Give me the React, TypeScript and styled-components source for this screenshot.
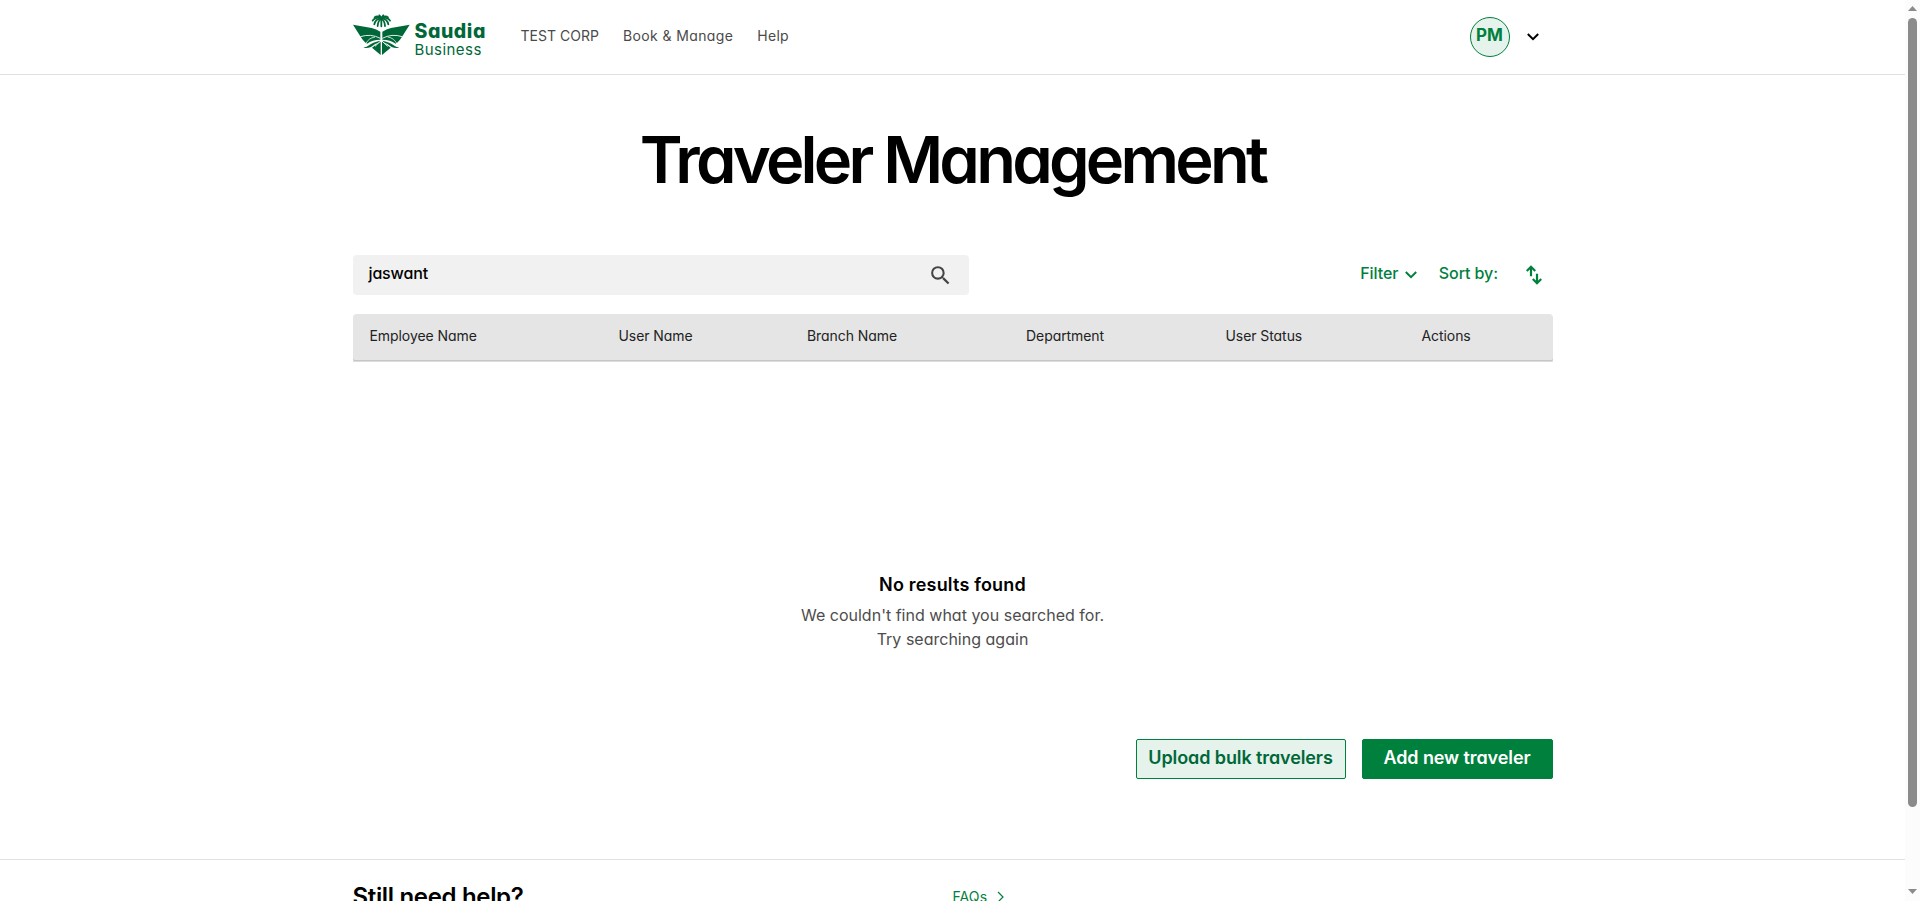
import React from 'react';
import styled, { createGlobalStyle } from 'styled-components';
import { MdSearch } from 'react-icons/md';

const green = '#00803d';
const darkGreen = '#006838';
const paleGreen = '#e6f2ec';

const GlobalStyle = createGlobalStyle`
  * { box-sizing: border-box; }
  body {
    margin: 0;
    background: #fff;
    overflow: hidden;
    font-family: Inter, "Liberation Sans", sans-serif;
    font-feature-settings: "cv11";
  }
`;

const Frame = styled.div`
  display: flex;
  height: 100vh;
  overflow: hidden;
`;
const Page = styled.div`
  flex: 1;
  min-width: 0;
  height: 100%;
  overflow: hidden;
`;
const Container = styled.div`
  width: 1200px;
  margin: 0 auto;
`;

const Header = styled.header`
  height: 75px;
  border-bottom: 1px solid #e1e1e1;
`;
const HeaderInner = styled(Container)`
  height: 74px;
  display: flex;
  align-items: center;
`;
const Brand = styled.div`
  display: flex;
  width: 168px;
  height: 42px;
  margin-bottom: 5px;
  color: ${darkGreen};
`;
const BrandText = styled.div`
  margin: 8px 0 0 5px;
`;
const BrandName = styled.div`
  font-size: 19.5px;
  font-weight: 800;
  letter-spacing: 0.55px;
  line-height: 19px;
  white-space: nowrap;
`;
const BrandSub = styled.div`
  font-size: 15px;
  font-weight: 400;
  letter-spacing: 0.45px;
  line-height: 18px;
`;
const Nav = styled.nav`
  display: flex;
  gap: 24px;
  flex: 1;
  margin-bottom: 2px;
`;
const NavLink = styled.a<{ $spacing?: number }>`
  font-size: 14px;
  line-height: 20px;
  color: #4a4a4a;
  letter-spacing: ${p => p.$spacing ?? 0}px;
`;
const Account = styled.div`
  display: flex;
  align-items: center;
  gap: 17px;
  margin-right: 14px;
`;
const Avatar = styled.div`
  width: 40px;
  height: 40px;
  border: 1px solid ${green};
  border-radius: 50%;
  background: ${paleGreen};
  color: ${green};
  font-size: 17px;
  font-weight: 700;
  line-height: 34px;
  text-align: center;
`;

const Title = styled.h1`
  margin: 45px 0 55px;
  font-size: 65px;
  font-weight: 600;
  line-height: 80px;
  letter-spacing: -3.76px;
  text-align: center;
  color: #000;
`;
const Toolbar = styled.div`
  display: flex;
  justify-content: space-between;
  height: 40px;
`;
const SearchBox = styled.div`
  display: flex;
  align-items: center;
  justify-content: space-between;
  width: 616px;
  padding: 0 16px;
  border-radius: 4px;
  background: #f1f1f1;
  color: #444;
`;
const SearchText = styled.span`
  margin-bottom: 4px;
  font-size: 16px;
  font-weight: 500;
  line-height: 24px;
  letter-spacing: -0.15px;
  color: #000;
`;
const Tools = styled.div`
  display: flex;
  align-items: center;
  padding-right: 11px;
  color: ${green};
`;
const ToolLabel = styled.span`
  margin-bottom: 4px;
  font-size: 16px;
  font-weight: 500;
  line-height: 24px;
  letter-spacing: -0.08px;
`;
const FilterButton = styled.div`
  display: flex;
  align-items: center;
  gap: 6.5px;
  margin-right: 22px;
`;
const SortButton = styled.div`
  display: flex;
  align-items: center;
  gap: 27.5px;
`;

const TableHead = styled.div`
  display: grid;
  grid-template-columns: 249px 188.5px 219px 199.5px 196px 1fr;
  height: 48px;
  margin-top: 19px;
  padding: 12px 0 0 17px;
  border-radius: 4px 4px 2px 2px;
  background: #e5e5e5;
  box-shadow: inset 0 -1px 0 #dcdcdc, inset 0 -2px 0 #c6c6c6;
`;
const HeadCell = styled.span`
  font-size: 14px;
  line-height: 20px;
  letter-spacing: -0.07px;
  color: #222;
`;

const EmptyState = styled.div`
  margin-top: 211px;
  text-align: center;
`;
const EmptyTitle = styled.h2`
  margin: 0 0 6px;
  font-size: 18px;
  font-weight: 600;
  line-height: 24px;
  letter-spacing: 0.19px;
  color: #000;
`;
const EmptyText = styled.p`
  margin: 0;
  font-size: 16px;
  line-height: 24px;
  letter-spacing: 0.01px;
  color: #4d4d4d;
`;
const Actions = styled.div`
  display: flex;
  justify-content: flex-end;
  gap: 16px;
  margin-top: 88px;
`;
const Button = styled.button<{ $primary?: boolean }>`
  width: ${p => (p.$primary ? 191 : 210)}px;
  height: 40px;
  padding: 0 0 3px;
  border: 1px solid ${green};
  border-radius: 2px;
  background: ${p => (p.$primary ? green : paleGreen)};
  color: ${p => (p.$primary ? '#fff' : darkGreen)};
  font: 600 18px/24px Inter, sans-serif;
  font-feature-settings: "cv11";
  letter-spacing: -0.1px;
`;
const Footer = styled.footer`
  margin-top: 80px;
  border-top: 1px solid #e1e1e1;
`;
const FooterInner = styled(Container)`
  display: grid;
  grid-template-columns: 1fr 1fr;
  padding-top: 21px;
`;
const FooterTitle = styled.h3`
  margin: 0;
  font-size: 24px;
  font-weight: 600;
  line-height: 32px;
  letter-spacing: -0.33px;
  color: #000;
`;
const FaqLink = styled.a`
  display: flex;
  align-items: center;
  gap: 10px;
  height: 20px;
  margin-top: 6px;
  font-size: 14px;
  line-height: 20px;
  letter-spacing: 0.1px;
  color: ${green};
`;

const Scrollbar = styled.div`
  display: flex;
  flex-direction: column;
  align-items: center;
  width: 15px;
  padding: 6px 0 7px;
  background: #fcfcfc;
`;
const Thumb = styled.div`
  width: 9px;
  height: 789px;
  margin: 7px 0 auto;
  border-radius: 5px;
  background: #8b8b8b;
`;
const Arrow = styled.svg`
  display: block;
  width: 9px;
  height: 5px;
  fill: #8b8b8b;
`;

const Chevron = () => (
  <svg width="12" height="8" viewBox="0 0 12 8" fill="none" stroke="currentColor" strokeWidth="2">
    <path d="M0.8 1 L6 6.2 L11.2 1" />
  </svg>
);

const Wing = () => (
  <>
    <path d="M38 71 L94 81 Q108 84 120 92 L120 116 Q96 116 80 128 Q70 122 59 104 Z" />
    <path d="M60 107 Q92 97 120 112" fill="none" stroke="#fff" strokeWidth="2.6" />
    <path d="M76 129 Q84 111 104 108" fill="none" stroke="#fff" strokeWidth="2.2" />
    <path d="M69 140 Q80 138 86 133 Q96 124 119 119 L120 123 Q103 127 92 138 Q80 143 69 140 Z" />
    <path d="M95 140 Q107 129 121 122 L121 162 Z" />
  </>
);

const Emblem = () => (
  <svg width="57" height="42" viewBox="38 39 171 126" fill="currentColor">
    <Wing />
    <g transform="translate(246 0) scale(-1 1)">
      <Wing />
    </g>
    <path d="M104 136 L123 118 L142 136" fill="none" stroke="#fff" strokeWidth="3" />
    <g fill="none" stroke="currentColor" strokeWidth="5.4" strokeLinecap="round">
      <path d="M123 54 V76" />
      <path d="M123 54 Q113 58 112 75" />
      <path d="M123 54 Q133 58 134 75" />
      <path d="M122 52 Q105 54 102 70" />
      <path d="M124 52 Q141 54 144 70" />
      <path d="M122 50 Q103 48 97 59" />
      <path d="M124 50 Q143 48 149 59" />
      <path d="M122 50 Q110 43 103 49" />
      <path d="M124 50 Q136 43 143 49" />
      <path d="M123 52 L117 43" />
      <path d="M123 52 L129 43" />
    </g>
  </svg>
);

const columns = ['Employee Name', 'User Name', 'Branch Name', 'Department', 'User Status', 'Actions'];

export default function App() {
  return (
    <Frame>
      <GlobalStyle />
      <Page>
        <Header>
          <HeaderInner>
            <Brand>
              <Emblem />
              <BrandText>
                <BrandName>Saudia</BrandName>
                <BrandSub>Business</BrandSub>
              </BrandText>
            </Brand>
            <Nav>
              <NavLink $spacing={0.02}>TEST CORP</NavLink>
              <NavLink $spacing={0.38}>Book &amp; Manage</NavLink>
              <NavLink $spacing={0.3}>Help</NavLink>
            </Nav>
            <Account>
              <Avatar>PM</Avatar>
              <Chevron />
            </Account>
          </HeaderInner>
        </Header>
        <Container>
          <Title>Traveler Management</Title>
          <Toolbar>
            <SearchBox>
              <SearchText>jaswant</SearchText>
              <MdSearch size={25} />
            </SearchBox>
            <Tools>
              <FilterButton>
                <ToolLabel>Filter</ToolLabel>
                <Chevron />
              </FilterButton>
              <SortButton>
                <ToolLabel>Sort by:</ToolLabel>
                <svg width="16" height="20" viewBox="0 0 16 20" fill="none" stroke="currentColor" strokeWidth="2.2">
                  <path d="M5 11.2 V2 M0.8 6 L5 1.8 L9.2 6" />
                  <path d="M11 8.8 V18 M6.8 14 L11 18.2 L15.2 14" />
                </svg>
              </SortButton>
            </Tools>
          </Toolbar>
          <TableHead>
            {columns.map(c => (
              <HeadCell key={c}>{c}</HeadCell>
            ))}
          </TableHead>
          <EmptyState>
            <EmptyTitle>No results found</EmptyTitle>
            <EmptyText>We couldn't find what you searched for.</EmptyText>
            <EmptyText>Try searching again</EmptyText>
          </EmptyState>
          <Actions>
            <Button>Upload bulk travelers</Button>
            <Button $primary>Add new traveler</Button>
          </Actions>
        </Container>
        <Footer>
          <FooterInner>
            <FooterTitle>Still need help?</FooterTitle>
            <FaqLink>
              FAQs
              <svg width="7" height="12" viewBox="0 0 7 12" fill="none" stroke="currentColor" strokeWidth="1.2">
                <path d="M1 1 L6 6 L1 11" />
              </svg>
            </FaqLink>
          </FooterInner>
        </Footer>
      </Page>
      <Scrollbar>
        <Arrow viewBox="0 0 9 5"><path d="M0 5 L4.5 0 L9 5 Z" /></Arrow>
        <Thumb />
        <Arrow viewBox="0 0 9 5"><path d="M0 0 L4.5 5 L9 0 Z" /></Arrow>
      </Scrollbar>
    </Frame>
  );
}
